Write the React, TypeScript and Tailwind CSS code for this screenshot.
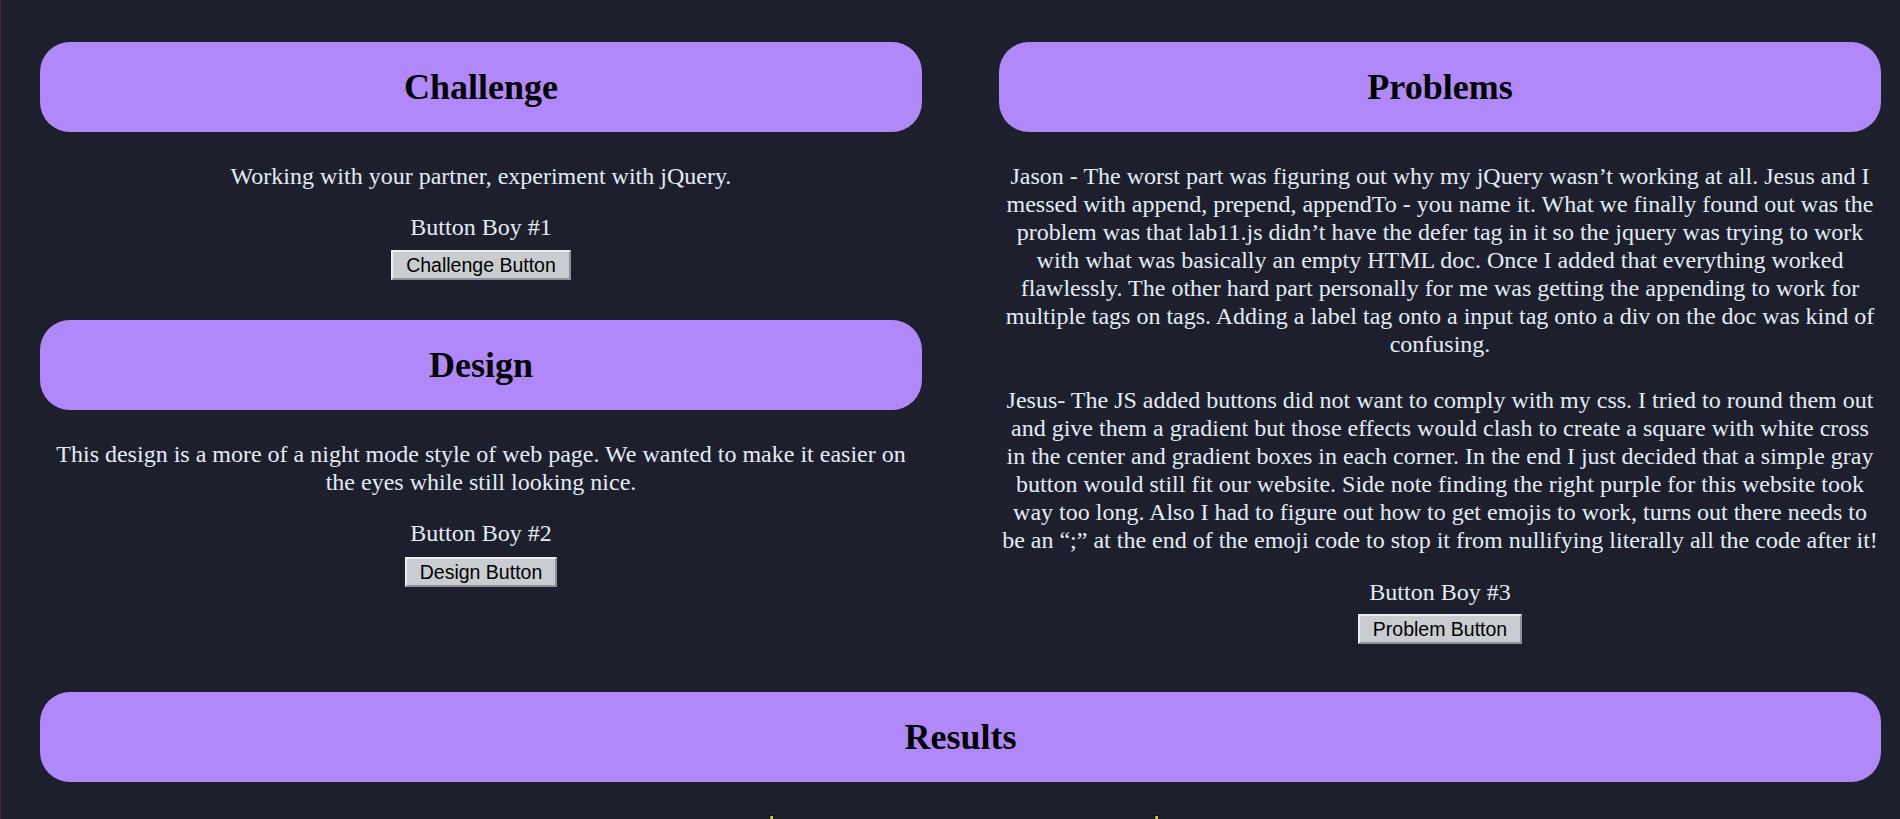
const serif = "font-['Liberation_Serif','Times_New_Roman',serif]";

function Banner({ title }: { title: string }) {
  return (
    <div className="flex h-[90px] items-center justify-center rounded-[30px] bg-[#b088f9]">
      <h2 className="text-[36px] font-bold leading-[41px] text-black">{title}</h2>
    </div>
  );
}

function ButtonBoy({ label, text, buttonClass }: { label: string; text: string; buttonClass: string }) {
  return (
    <div className="flex flex-col items-center">
      <p className="leading-[28px]">{label}</p>
      <button
        className={`h-[30px] border-2 border-t-[#eceef0] border-l-[#eceef0] border-r-[#8e9093] border-b-[#8e9093] bg-[#c9cdd1] px-[13px] font-['Liberation_Sans',Arial,sans-serif] text-[19.5px] leading-[24px] text-black ${buttonClass}`}
      >
        {text}
      </button>
    </div>
  );
}

export default function App() {
  return (
    <div className={`min-h-screen overflow-hidden border-l border-[#5a1e32] bg-[#1e1f2d] ${serif} text-[24px] text-[#e2ecf6]`}>
      <main className="pb-10 pl-[39px] pr-[19px] pt-[42px]">
        <div className="grid grid-cols-2 gap-x-[77px]">
          <section className="flex flex-col">
            <Banner title="Challenge" />
            <p className="mt-[30px] text-center leading-[28px]">
              Working with your partner, experiment with jQuery.
            </p>
            <div className="mt-[23px]">
              <ButtonBoy label="Button Boy #1" text="Challenge Button" buttonClass="mt-[9px]" />
            </div>

            <div className="mt-[40px]">
              <Banner title="Design" />
            </div>
            <p className="mt-[30px] text-center leading-[28px]">
              This design is a more of a night mode style of web page. We wanted to make it easier on
              the eyes while still looking nice.
            </p>
            <div className="mt-[23px]">
              <ButtonBoy label="Button Boy #2" text="Design Button" buttonClass="mt-[10px]" />
            </div>
          </section>

          <section className="flex flex-col">
            <Banner title="Problems" />
            <p className="mt-[30px] text-center leading-[28px]">
              Jason - The worst part was figuring out why my jQuery wasn’t working at all. Jesus and I
              messed with append, prepend, appendTo - you name it. What we finally found out was the
              problem was that lab11.js didn’t have the defer tag in it so the jquery was trying to work
              with what was basically an empty HTML doc. Once I added that everything worked
              flawlessly. The other hard part personally for me was getting the appending to work for
              multiple tags on tags. Adding a label tag onto a input tag onto a div on the doc was kind of
              confusing.
              <br />
              <br />
              Jesus- The JS added buttons did not want to comply with my css. I tried to round them out
              and give them a gradient but those effects would clash to create a square with white cross
              in the center and gradient boxes in each corner. In the end I just decided that a simple gray
              button would still fit our website. Side note finding the right purple for this website took
              way too long. Also I had to figure out how to get emojis to work, turns out there needs to
              be an “;” at the end of the emoji code to stop it from nullifying literally all the code after it!
            </p>
            <div className="mt-[24px]">
              <ButtonBoy label="Button Boy #3" text="Problem Button" buttonClass="mt-[8px]" />
            </div>
          </section>
        </div>

        <div className="mt-[48px]">
          <Banner title="Results" />
        </div>

        <div className="mt-[33px] flex justify-center pl-[6px]">
          <svg width="5" height="14" viewBox="0 0 5 14" className="block">
            <rect x="0.5" y="0.5" width="4" height="13" fill="#e8c21a" stroke="#111" />
            <rect x="1" y="1" width="1" height="12" fill="#5fae2e" />
          </svg>
          <div className="w-[380px]" />
          <svg width="5" height="14" viewBox="0 0 5 14" className="block">
            <rect x="0.5" y="0.5" width="4" height="13" fill="#e8c21a" stroke="#111" />
            <rect x="1" y="1" width="1" height="12" fill="#5fae2e" />
          </svg>
        </div>
      </main>
    </div>
  );
}
